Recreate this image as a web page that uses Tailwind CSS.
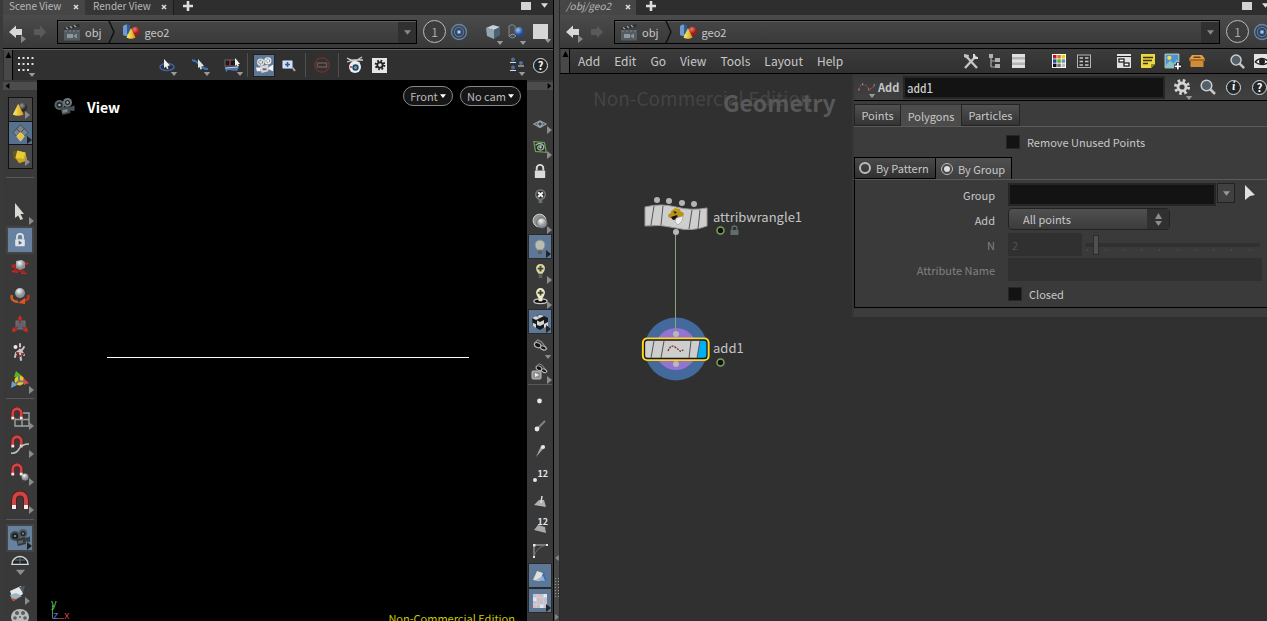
<!DOCTYPE html>
<html lang="en">
<head>
<meta charset="utf-8">
<title>Scene View</title>
<script src="https://cdn.jsdelivr.net/npm/@tailwindcss/browser@4"></script>
</head>
<body class="h-screen overflow-hidden bg-[#303030] font-['Noto_Sans_CJK_SC','Noto_Sans',sans-serif] text-[11px] leading-4 text-[#c8c8c8]">
<svg class="absolute size-0">
<defs>
<linearGradient id="gold" x1="0" y1="0" x2="1" y2="0"><stop offset="0" stop-color="#fff06a"/><stop offset="1" stop-color="#d79b12"/></linearGradient>
<radialGradient id="red" cx=".4" cy=".3"><stop offset="0" stop-color="#f07a6a"/><stop offset="1" stop-color="#a01c18"/></radialGradient>
<radialGradient id="blue" cx=".4" cy=".3"><stop offset="0" stop-color="#9cc4f0"/><stop offset="1" stop-color="#23488c"/></radialGradient>
<radialGradient id="grey" cx=".4" cy=".3"><stop offset="0" stop-color="#f4f4f4"/><stop offset="1" stop-color="#8a9096"/></radialGradient>
<radialGradient id="dark" cx=".4" cy=".3"><stop offset="0" stop-color="#9a9a9a"/><stop offset="1" stop-color="#2a2a2a"/></radialGradient>
</defs>
<symbol id="tri-d" viewBox="0 0 8 5"><path d="M0 0H8L4 5Z" fill="currentColor"/></symbol>
<symbol id="tri-u" viewBox="0 0 8 8"><path d="M0 8H8L4 0Z" fill="currentColor"/></symbol>
<symbol id="tri-r" viewBox="0 0 5 8"><path d="M0 0V8L5 4Z" fill="currentColor"/></symbol>
<symbol id="tri-l" viewBox="0 0 5 8"><path d="M5 0V8L0 4Z" fill="currentColor"/></symbol>
<symbol id="back" viewBox="0 0 16 16"><path d="M1 8L8 1.500V5H14V11H8V14Z" fill="currentColor"/></symbol>
<symbol id="fwd" viewBox="0 0 16 16"><path d="M14 8L8 1.500V5H2V11H8V14Z" fill="currentColor"/></symbol>
<symbol id="plus" viewBox="0 0 10 10"><path d="M5 0V10M0 5H10" stroke="currentColor" stroke-width="2.600"/></symbol>
<symbol id="x" viewBox="0 0 6 6"><path d="M1 1L5 5M5 1L1 5" stroke="currentColor" stroke-width="1.500"/></symbol>
<symbol id="clapper" viewBox="0 0 18 18"><rect x="1" y="7" width="16" height="10.500" fill="#525c62"/><path d="M1 5L16 1L17 3.500L2 7Z" fill="#2c3032"/><path d="M3 4.500L5 6M7 3.300L9 5M11 2.200L13 4" stroke="#9aa2a6" stroke-width="1.500"/><path d="M2 8H16" stroke="#788288" stroke-dasharray="2 2"/><rect x="4" y="11" width="6" height="4" fill="#8f989c"/><path d="M10 13L14 10.500V15.500Z" fill="#8a9296"/></symbol>
<symbol id="geo" viewBox="0 0 18 18"><path d="M1 3Q4 0 8 3V12Q4 14 1 12Z" fill="#6d9bd0"/><path d="M5 1.500Q8 2 8 4V11H5Z" fill="#2f5c98"/><circle cx="13.500" cy="8" r="4.300" fill="url(#red)"/><path d="M9 5L13.500 14.500Q9 17 4.500 14.500Z" fill="url(#gold)"/></symbol>
<symbol id="rings" viewBox="0 0 18 18" ><g fill="none"><circle cx="9" cy="9" r="7.500" stroke-width="1.300" stroke="#6285b4"/><circle cx="9" cy="9" r="4.600" stroke="#5078ac" stroke-width="1.200"/></g><circle cx="9" cy="9" r="2.300" fill="#4a8fe0"/><circle cx="9" cy="9" r="1" fill="#cfe4ff"/></symbol>
<symbol id="box" viewBox="0 0 18 18"><path d="M2 5L9 2L16 4L10 7Z" fill="#c6d2d8"/><path d="M2 5L10 7V16L3 13Z" fill="#93a7b3"/><path d="M10 7L16 4V12L10 16Z" fill="#4a6272"/></symbol>
<symbol id="ghost" viewBox="0 0 18 18"><path d="M2 3Q5 0 8 3L9 13Q5 17 2 13Z" fill="#4c4c4c" stroke="#858585"/><circle cx="12" cy="9" r="5" fill="url(#blue)"/><path d="M2 14Q5 9 9 13" fill="none" stroke="#999"/></symbol>
<symbol id="dots" viewBox="0 0 16 16"><g fill="#e0e0e0"><path d="M0 0h2v2H0zM4.500 0h2v2h-2zM9 0h2v2H9zM13.500 0h2v2h-2zM0 6h2v2H0zM4.500 6h2v2h-2zM9 6h2v2H9zM13.500 6h2v2h-2zM0 12h2v2H0zM4.500 12h2v2h-2zM9 12h2v2H9z"/></g></symbol>
<symbol id="sel" viewBox="0 0 18 18"><ellipse cx="9" cy="11" rx="7" ry="3.500" fill="none" stroke="#3c62a0" stroke-width="1.600"/><path d="M6 3L12 9.500L9.500 10L10.500 12.500L9 13L8 10.500L6 12Z" fill="#f2f2f2"/></symbol>
<symbol id="sel2" viewBox="0 0 18 18"><path d="M1 4Q6 5 9 9T17 13" fill="none" stroke="#3f6fae" stroke-width="2.200"/><path d="M7 3L13 10L10 10.500L11 13L9.500 13.500L8.600 11L7 12Z" fill="#e2e2e2"/></symbol>
<symbol id="sel3" viewBox="0 0 18 18"><rect x="1" y="4" width="12" height="6" fill="#1b1b1b" stroke="#666"/><path d="M6 4v6" stroke="#a33" stroke-width="1.500"/><path d="M1 12L15 11L13 15L4 14L2 16Z" fill="#4a77b4"/><path d="M1 12L14 11" stroke="#c2d4ec"/><path d="M11 2L16 8L14 8L15 10L13.500 10.500L12.500 8.500L11 10Z" fill="#f2f2f2"/></symbol>
<symbol id="movie" viewBox="0 0 20 20"><circle cx="6" cy="6.500" r="3.800" fill="#dedede"/><circle cx="13.500" cy="5" r="3.800" fill="#eee"/><g fill="none" stroke="#566" stroke-dasharray="1.500 1"><circle cx="6" cy="6.500" r="2"/><circle cx="13.500" cy="5" r="2"/></g><path d="M5 11L14 9V16L7 18Z" fill="#d8d8d8"/><path d="M14 12L19 9V16L14 14ZM1 12H6V16H2Z" fill="#f4f4f4"/><path d="M8 13h4v2H8z" fill="#667"/></symbol>
<symbol id="camdark" viewBox="0 0 22 20"><circle cx="6" cy="8" r="5" fill="#59646a"/><circle cx="14" cy="5.500" r="4.500" fill="#6d797f"/><g fill="#20262a"><circle cx="6" cy="8" r="3"/><circle cx="14" cy="5.500" r="2.500"/></g><circle cx="6" cy="8" r="1.300" fill="#9aa"/><circle cx="14" cy="5.500" r="1.200" fill="#9aa"/><path d="M7 11L16 9L17 16L9 18Z" fill="#434b50"/><path d="M16 10L21 8.500V14L16 13.500Z" fill="#49545a"/><path d="M9 13l5-1v3l-5 1z" fill="#788"/></symbol>
<symbol id="zoombox" viewBox="0 0 18 18"><path d="M12 11L15 15" stroke="#a8a8a8" stroke-width="2"/><rect x="2.500" y="4.500" width="10" height="8" rx="1" fill="#d5e1f0" stroke="#87929e"/><path d="M7.500 6V11M5 8.500H10" stroke="#2f5c9c" stroke-width="1.600"/></symbol>
<symbol id="noentry" viewBox="0 0 18 18"><circle cx="9" cy="9" r="7.200" fill="#3a2c2c" stroke="#6e3434" stroke-width="1.300"/><rect x="4.500" y="7" width="9" height="4" fill="none" stroke="#5c5c5c" stroke-width="1.500"/></symbol>
<symbol id="snap" viewBox="0 0 18 18"><path d="M1 2L8 6L16 1M1 6L8 4H17M3 3L14 7" stroke="#cfcfcf" stroke-width="1.300" fill="none"/><circle cx="9" cy="11" r="6" fill="#eceff0"/><circle cx="9.500" cy="11.500" r="3.200" fill="#27475c"/><circle cx="9.500" cy="11.500" r="1.500" fill="#5ea6d0"/><path d="M4 10h2v2H4z" fill="#d55"/></symbol>
<symbol id="gear" viewBox="0 0 18 18"><circle cx="9" cy="9" r="6" fill="none" stroke="currentColor" stroke-width="4" stroke-dasharray="2.356 2.356"/><circle cx="9" cy="9" r="4" fill="none" stroke="currentColor" stroke-width="2.800"/></symbol>
<symbol id="users" viewBox="0 0 18 18"><g fill="#4d6ca0"><circle cx="5" cy="3.500" r="2"/><circle cx="13" cy="7" r="2"/><circle cx="5" cy="11.500" r="2"/></g><g fill="#dadde2"><path d="M2 6h6v1H2zM10 9.500h6v1h-6zM2 14h6v1H2z"/></g></symbol>
<symbol id="mag" viewBox="0 0 18 18"><path d="M11 11L16 16" stroke="#c4c4c4" stroke-width="2.600"/><circle cx="7.500" cy="7.500" r="5.300" fill="#53606a" stroke="#cdcdcd" stroke-width="1.500"/></symbol>
<symbol id="cone" viewBox="0 0 20 20"><circle cx="13" cy="7" r="5" fill="url(#dark)"/><path d="M8 3L14 15Q8 18 2 15Z" fill="url(#gold)"/></symbol>
<symbol id="diam" viewBox="0 0 20 20"><g stroke="#2d3438" stroke-width=".7"><path d="M10 1L18 9L10 17L2 9Z" fill="#7c8488"/><path d="M6 5L14 13M14 5L6 13"/><path d="M10 9L14 13L10 18L6 13Z" fill="#e9bf3c" stroke="#fff0a0"/></g></symbol>
<symbol id="gcube" viewBox="0 0 20 20"><path d="M2 4L10 2L9 14L3 12Z" fill="#6b5a10"/><path d="M7 3L16 5L18 14L9 17L5 11Z" fill="#cda818"/><path d="M7 3L16 5L14 12L5 11Z" fill="#e6cc3c"/></symbol>
<symbol id="arrow" viewBox="0 0 20 20"><path d="M5 1L14 12H10.500L13 17L10.500 18L8.200 13.500L5 16Z" fill="#d9d9d4"/></symbol>
<symbol id="lock" viewBox="0 0 16 18"><path d="M4.500 8V5.500a3.500 3.500 0 0 1 7 0V8" fill="none" stroke="currentColor" stroke-width="2"/><rect x="2.500" y="8" width="11" height="8" rx="1" fill="currentColor"/></symbol>
<symbol id="slock" viewBox="0 0 16 18"><use href="#lock"/><path d="M6.500 9.500L10.500 12.500L6.500 14.500Z" fill="#4d6680"/></symbol>
<symbol id="move" viewBox="0 0 20 20"><path d="M1 14L6 10L8 15ZM17 16L12 11L11 16ZM19 5L13 4L14 9ZM1 7L6 6L8 9L3 10Z" fill="#c22a20"/><path d="M4 12L15 14M4 8L16 7" stroke="#a4221a" stroke-width="2"/><path d="M6 3L12 2L15 4V10L10 12L6 10Z" fill="url(#grey)"/></symbol>
<symbol id="rot" viewBox="0 0 20 20"><path d="M2 9Q0 15 8 16" fill="none" stroke="#d8601e" stroke-width="2.500"/><path d="M18 9Q20 14 13 15" fill="none" stroke="#c8331c" stroke-width="2.500"/><path d="M8 17L15 12V18Z" fill="#e2541c"/><circle cx="10" cy="7" r="5" fill="url(#grey)"/></symbol>
<symbol id="scale" viewBox="0 0 20 20"><rect x="6" y="7" width="9" height="8" fill="#59646c" stroke="#6a757c"/><path d="M10 9V4M8 13L5 15M13 13L15 15" stroke="#b3231c" stroke-width="2"/><path d="M10 1L12.500 5.500H7.500ZM2 18L3 13L7 17ZM18 18L17 13L13 17Z" fill="#d22a22"/></symbol>
<symbol id="pose" viewBox="0 0 20 20"><g stroke="#c8c8c8" stroke-width="2" stroke-linecap="round" fill="none"><path d="M10 2L10 7L14 13M10 8L6 11L5 15M10 11L11 18M12 8L14 5"/></g><circle cx="5.500" cy="5" r="2" fill="#e8e8e8"/><path d="M9 5h2v2H9zM6 10h2v2H6zM12 11h2v2h-2zM9 13h2v2H9z" fill="#b2302a"/></symbol>
<symbol id="axes" viewBox="0 0 20 20"><circle cx="9.500" cy="10.500" r="5" fill="#e6c824"/><path d="M9 11V4M9 11L4 15M9 11L16 12" stroke="#777" stroke-width="2"/><path d="M6 1L12 6L4 7Z" fill="#58b427"/><path d="M1 18L2 11L7 15Z" fill="#6e9fd4"/><path d="M19 13L13 8L14 15Z" fill="#d8484a"/></symbol>
<symbol id="magnet" viewBox="0 0 20 20"><path d="M4 18V8.500a6 6 0 0 1 12 0V18" fill="none" stroke="#5c1414" stroke-width="5.500"/><path d="M4 17V8.500a6 6 0 0 1 12 0V17" fill="none" stroke="#cf4444" stroke-width="4"/><path d="M2 14h4v4H2zM14 14h4v4h-4z" fill="#eee"/></symbol>
<symbol id="mgrid" viewBox="0 0 22 22"><path d="M12 7H20V20H6V12M13 7V20M6 13.500H20" fill="none" stroke="#9aa6a2" stroke-width="1.400"/><use href="#magnet" x="1" y="1" width="14" height="14"/></symbol>
<symbol id="mcurve" viewBox="0 0 22 22"><use href="#magnet" x="1" y="1" width="14" height="14"/><path d="M2 19Q7 20 10 15T20 10" fill="none" stroke="#b8c4c4" stroke-width="1.500"/></symbol>
<symbol id="mpoint" viewBox="0 0 22 22"><use href="#magnet" x="1" y="1" width="14" height="14"/><circle cx="16" cy="15" r="3.500" fill="url(#grey)"/></symbol>
<symbol id="globe" viewBox="0 0 20 10"><path d="M2 9.500a8 8 0 0 1 16 0Z" fill="#20262c" stroke="#d8d8d8" stroke-width="1.500"/><path d="M10 2V9M5 5H15" stroke="#68747c"/></symbol>
<symbol id="books" viewBox="0 0 20 20"><path d="M2 8L13 3L15 11L5 17Z" fill="#e4e8ea"/><path d="M2 12L8 10L14 13L5 18Z" fill="#9db4c4"/><path d="M2 15L8 16L14 13L6 18Z" fill="#bd4a34"/><path d="M11 4L17 3L15 10Z" fill="#4c5960"/></symbol>
<symbol id="reel" viewBox="0 0 20 20"><ellipse cx="10" cy="10" rx="9" ry="8" fill="#b9bcb8"/><g fill="#5b5e5c"><circle cx="7" cy="6" r="2"/><circle cx="13" cy="6" r="2"/><circle cx="5" cy="11" r="1.800"/><circle cx="15" cy="11" r="1.800"/><circle cx="10" cy="10" r="1"/></g></symbol>
<symbol id="eye" viewBox="0 0 18 18"><path d="M2 9L9 5.500L16 9L9 13Z" fill="#536168" stroke="#93a0a4" stroke-width="1.200"/><circle cx="9" cy="9" r="2.500" fill="#39444a" stroke="#bcc8cc"/></symbol>
<symbol id="eyegreen" viewBox="0 0 18 18"><path d="M2 3L14 4L16 15L4 14Z" fill="#1e2c22" stroke="#6e9c58" stroke-width="1.400"/><path d="M4 7Q9 3 13 7.500Q14 12 9.500 12.500Q6 12 6.500 9Q8 6.500 11 8" fill="none" stroke="#a4b8a8" stroke-width="1.500"/><circle cx="9.500" cy="9.500" r="1.300" fill="#cfe2d0"/></symbol>
<symbol id="bulbx" viewBox="0 0 18 18"><circle cx="9" cy="7" r="5" fill="#2a2e2e" stroke="#828886" stroke-width="1.300"/><path d="M6.500 4.500L11.500 9.500M11.500 4.500L6.500 9.500" stroke="#f0f0f0" stroke-width="2"/><path d="M7 12h4v4H7z" fill="#69706e"/></symbol>
<symbol id="balls" viewBox="0 0 18 18"><circle cx="8" cy="8" r="6.800" fill="#8f9290" stroke="#d8dad8"/><circle cx="10.500" cy="10.500" r="5.500" fill="url(#grey)" stroke="#5d605e" stroke-width=".8"/></symbol>
<symbol id="bulb" viewBox="0 0 18 18"><path d="M9 2a5 5 0 0 1 5 5Q14 9.500 11.500 12H6.500Q4 9.500 4 7a5 5 0 0 1 5-5Z" fill="#b9bcb4" stroke="#8a8c84"/><path d="M7 12.500h4v3.500H7z" fill="#59605e"/></symbol>
<symbol id="bulbp" viewBox="0 0 18 18"><path d="M9 1a4.700 4.700 0 0 1 4.700 5Q13.500 8.500 11 11.500H7Q4.500 8.500 4.300 6A4.700 4.700 0 0 1 9 1Z" fill="#dcdaa4"/><path d="M9 3V9M6 6H12" stroke="#444430" stroke-width="2"/><path d="M7 12h4v4H7z" fill="#59605e"/></symbol>
<symbol id="bulbs" viewBox="0 0 18 18"><ellipse cx="9" cy="14" rx="7" ry="2.500" fill="#0c0c0c" stroke="#c8c8c8" stroke-width="1.400"/><path d="M9 0a4.700 4.700 0 0 1 4.700 5Q13.500 7.500 11 11V14H7V11Q4.500 7.500 4.300 5A4.700 4.700 0 0 1 9 0Z" fill="#eeeccc"/><path d="M9 2V8M6 5H12" stroke="#444430" stroke-width="2"/></symbol>
<symbol id="checkcube" viewBox="0 0 18 18"><path d="M1 5L9 1L17 5V12L9 17L2 13Z" fill="#17191b"/><path d="M1 5L5 3L9 5L5 7ZM9 1.500L13 3L9 5L6 3ZM2 10L5 11V15L2 13ZM6 7.500L9 9V13L6 12ZM13 11L17 9V13L13 15ZM9 9L13 7V11L9 13Z" fill="#d4d4d4"/></symbol>
<symbol id="specs" viewBox="0 0 18 18"><path d="M2 6L6 2L10 4L16 12" fill="none" stroke="#8c9292" stroke-width="1.200"/><g fill="#101212" stroke="#b4b8b6" stroke-width="1.200"><ellipse cx="6" cy="7.500" rx="3.600" ry="2.500" transform="rotate(25 6 7.500)"/><ellipse cx="12" cy="10.500" rx="3.200" ry="2" transform="rotate(25 12 10.500)"/></g></symbol>
<symbol id="specs2" viewBox="0 0 18 18"><use href="#specs" x="3" y="-1" width="15" height="15"/><rect x="1" y="8" width="9" height="8" rx="1" fill="#8e928f" stroke="#bbb"/><path d="M4 10V14L8 12Z" fill="#eee"/></symbol>
<symbol id="pt" viewBox="0 0 18 18"><circle cx="8.500" cy="9" r="2.400" fill="#e4e8e6"/></symbol>
<symbol id="ptn" viewBox="0 0 18 18"><path d="M7 11L14 4" stroke="#7e8684" stroke-width="2"/><circle cx="6" cy="12" r="2.400" fill="#e4e8e6"/></symbol>
<symbol id="ptt" viewBox="0 0 18 18"><path d="M13 6L5 15L10 4Z" fill="#a0a6a4"/><circle cx="12" cy="5" r="2.100" fill="#e4e8e6"/></symbol>
<symbol id="prn" viewBox="0 0 18 18"><path d="M8 8L13 8L15 15L3 13Z" fill="#b0b4b0"/><path d="M10 11L11 4" stroke="#ddd" stroke-width="1.500"/></symbol>
<symbol id="poly" viewBox="0 0 18 18"><path d="M7 8L14 10L15 16L3 13Z" fill="#a8aca8"/></symbol>
<symbol id="hull" viewBox="0 0 18 18"><path d="M3 16V3H16" fill="none" stroke="#8f9593" stroke-width="1.300"/><path d="M3 15Q5 5 16 3" fill="none" stroke="#6a706e"/><path d="M2 2h2.500v2.500H2zM15 2h2v2h-2zM2 14h2v2H2z" fill="#e4e4e4"/></symbol>
<symbol id="plane" viewBox="0 0 18 18"><path d="M11 6L13 5L16 14L9 12Z" fill="#3c70b4"/><path d="M6 4L12 6L9 14L2 13Z" fill="#e0e0d8"/><path d="M5 13L12 9L14 14Z" fill="#8fb2d8"/></symbol>
<symbol id="chk" viewBox="0 0 14 14"><path d="M0 0h14v14H0z" fill="#e4e6e8"/><path d="M0 0h3.500v3.500H0zM7 0h3.500v3.500H7zM3.500 3.500H7V7H3.500zM10.500 3.500H14V7h-3.500zM0 7h3.500v3.500H0zM7 7h3.500v3.500H7zM3.500 10.500H7V14H3.500zM10.500 10.500H14V14h-3.500z" fill="#b4c6dc"/><path d="M3.500 0H7v3.500H3.500zM7 3.500h3.500V7H7zM3.500 7H7v3.500H3.500zM10.500 7H14v3.500h-3.500zM0 10.500h3.500V14H0z" fill="#e2b9b4"/></symbol>
<symbol id="tools" viewBox="0 0 16 16"><path d="M3 3L14 15M13 3L2 15" stroke="#c4c4c4" stroke-width="2.400"/><path d="M1 1L6 2L5 6L1 4Z" fill="#c4c4c4"/><path d="M11 5V1M15 5H11" stroke="#dcdcdc" stroke-width="2"/></symbol>
<symbol id="tree" viewBox="0 0 16 16"><path d="M4 3V14M4 8H9M4 14H9" fill="none" stroke="#aaa" stroke-width="1.200"/><path d="M2 1h4v4H2zM8 5h5v4H8zM8 11h5v4H8z" fill="#b0b0b0"/></symbol>
<symbol id="list" viewBox="0 0 16 16"><path d="M1 1h13v14H1z" fill="#b4b4b4"/><path d="M1 1h13v3H1zM1 6.500h13v3H1zM1 12h13v3H1z" fill="#e0e0e0"/></symbol>
<symbol id="pal" viewBox="0 0 16 16"><path d="M1 1h14v14H1z" fill="#fff"/><path d="M2 2h3.500v3.500H2z" fill="#c01818"/><path d="M6.300 2h3.500v3.500H6.300z" fill="#e26a18"/><path d="M10.600 2h3.500v3.500h-3.500z" fill="#e4d000"/><path d="M2 6.300h3.500v3.500H2z" fill="#1848b0"/><path d="M6.300 6.300h3.500v3.500H6.300z" fill="#58b018"/><path d="M10.600 6.300h3.500v3.500h-3.500z" fill="#6890c0"/><path d="M2 10.600h3.500v3.500H2z" fill="#111"/><path d="M6.300 10.600h3.500v3.500H6.300z" fill="#777"/><path d="M10.600 10.600h3.500v3.500h-3.500z" fill="#bbb"/></symbol>
<symbol id="sheet" viewBox="0 0 16 16"><rect x="1.500" y="2" width="13" height="12.500" fill="#303030" stroke="#b4b4b4"/><path d="M3.500 5H7M9 5H12.500M3.500 8.500H7M9 8.500H12.500M3.500 12H7M9 12H12.500" stroke="#c8c8c8" stroke-width="1.500"/></symbol>
<symbol id="nbox" viewBox="0 0 16 16"><path d="M1 1h14v14H1z" fill="#e0e0e0"/><path d="M1 3.500H15" stroke="#222"/><rect x="3" y="6" width="5" height="3" fill="#fff" stroke="#111" stroke-width="1.200"/><rect x="8" y="10" width="5" height="3" fill="#fff" stroke="#111" stroke-width="1.200"/></symbol>
<symbol id="note" viewBox="0 0 16 16"><path d="M1 1H15V11L11 15H1Z" fill="#ecd845"/><path d="M15 11H11V15Z" fill="#9a8820"/><path d="M3 4.500H13M3 7.500H12M3 10.500H8" stroke="#3a3408" stroke-width="1.300"/></symbol>
<symbol id="pic" viewBox="0 0 16 16"><path d="M1 1h13v13H1z" fill="#4d94d0" stroke="#ddd" stroke-width=".8"/><circle cx="5" cy="4.500" r="2" fill="#f4e23c"/><path d="M1 12L6 7L9 10L12 6L14 9V14H1Z" fill="#8dc2c8"/><path d="M13 9V16M9.500 12.500H16" stroke="#111" stroke-width="3.500"/><path d="M13 9.500V15.500M10 12.500H16" stroke="#fff" stroke-width="1.700"/></symbol>
<symbol id="crate" viewBox="0 0 16 16"><path d="M3 2H13L16 6H0Z" fill="#e0a050"/><path d="M5 3.500H11L12 5H4Z" fill="#6a4010"/><path d="M0 6H16V8H0Z" fill="#b06c20"/><path d="M1.500 8H14.500V14H1.500Z" fill="#d08c38"/></symbol>
<symbol id="eyeb" viewBox="0 0 16 16"><path d="M0 1h16v14H0z" fill="#e4e4e4"/><path d="M1 9Q8 2 15 9Q8 14 1 9" fill="#fff" stroke="#222" stroke-width="1.400"/><circle cx="8" cy="8.500" r="3" fill="#222"/></symbol>
<symbol id="squig" viewBox="0 0 20 14"><path d="M1 10Q3 3 6 4T11 8T18 6" fill="none" stroke="#a84848" stroke-width="1.300" stroke-dasharray="2 1.500"/><path d="M1 9v2M5 3v2M12 9v2M18 4v2" stroke="#999" stroke-width="1.200"/></symbol>
</svg>

<div class="grid h-full grid-cols-[554fr_6px_707fr]">

<!-- Scene view pane -->
<section class="flex min-w-0 flex-col overflow-hidden border-r border-black bg-[#3a3a3a] pl-[3px]" aria-label="Scene View">
  <nav class="flex h-[15px] shrink-0 items-center bg-[#2e2e2e] text-[10px] text-[#b8b8b8]">
    <button class="flex h-full w-[82px] items-center justify-between bg-[#464646] pr-1.5 pl-1.5 leading-3"><span class="-mt-1 whitespace-nowrap">Scene View</span><svg class="-mt-0.5 size-1.5 text-[#ddd]"><use href="#x"/></svg></button>
    <button class="flex h-full w-[89px] items-center justify-between border-r border-[#1c1c1c] bg-[#363636] pr-1.5 pl-2 leading-3"><span class="-mt-1 whitespace-nowrap">Render View</span><svg class="-mt-0.5 size-1.5 text-[#ddd]"><use href="#x"/></svg></button>
    <button class="-mt-1 ml-[9px] text-[#ddd]" aria-label="New tab"><svg class="size-[10px]"><use href="#plus"/></svg></button>
    <button class="-mt-1 ml-auto h-2 w-[10px] bg-[#d4d4d0]" aria-label="Maximize"></button>
    <button class="-mt-1 mr-[5px] ml-2.5 text-[#ddd]" aria-label="Pane menu"><svg class="h-[5px] w-[7px]"><use href="#tri-d"/></svg></button>
  </nav>
  <div class="flex h-[34px] shrink-0 items-center border-b border-black bg-linear-to-b from-[#4b4b4b] to-[#393939] pl-[5px]">
    <button class="relative text-[#d8d8d4]" aria-label="Back"><svg class="size-4"><use href="#back"/></svg><svg class="absolute -right-0.5 bottom-[-3px] h-2 w-[5px] text-[#888]"><use href="#tri-r"/></svg></button>
    <button class="ml-2 text-[#5a5a5a]" aria-label="Forward"><svg class="size-4"><use href="#fwd"/></svg></button>
    <div class="ml-[9px] flex h-6 min-w-0 flex-1 items-center border border-black bg-linear-to-b from-[#454545] to-[#3a3a3a] shadow-[inset_0_1px_#5c5c5c]">
      <svg class="ml-[5px] size-[18px]"><use href="#clapper"/></svg><a href="#obj" class="ml-1">obj</a>
      <svg class="mx-[6px] h-[22px] w-2"><path d="M1 0L6 11L1 22" fill="none" stroke="#111" stroke-width="1.500"/></svg>
      <svg class="size-[18px]"><use href="#geo"/></svg><a href="#geo2" class="ml-[5px]">geo2</a>
      <button class="mt-px ml-auto grid h-[21px] w-[18px] place-items-center bg-[#303030] text-[#888]" aria-label="Path history"><svg class="h-[5px] w-[7px]"><use href="#tri-d"/></svg></button>
    </div>
    <button class="ml-1.5 grid size-[23px] shrink-0 place-items-center rounded-full border border-[#bbb] bg-[#3c3c3c] text-xs text-[#aaa]">1</button>
    <svg class="ml-1 size-[18px] shrink-0"><use href="#rings"/></svg>
    <button class="relative ml-4 shrink-0" aria-label="Shading"><svg class="size-[18px]"><use href="#box"/></svg><svg class="absolute -right-0.5 -bottom-1 h-1 w-2 text-[#999]"><use href="#tri-d"/></svg></button>
    <button class="relative ml-[5px] shrink-0" aria-label="Ghosting"><svg class="size-[18px]"><use href="#ghost"/></svg><svg class="absolute -right-0.5 -bottom-1 h-1 w-2 text-[#999]"><use href="#tri-d"/></svg></button>
    <button class="relative mr-[5px] ml-2 size-[15px] shrink-0 bg-[#d6d6d4]" aria-label="Layout"><svg class="absolute -right-1 -bottom-1 h-1 w-2 text-[#999]"><use href="#tri-d"/></svg></button>
  </div>
  <div class="flex h-[31px] shrink-0 items-center border-t border-[#606060] bg-[#303030]">
    <button class="ml-px flex h-full w-[9px] justify-center border-r border-black bg-[#484848] pt-0.5 text-black" aria-label="Collapse toolbar"><svg class="h-1.5 w-[7px]"><use href="#tri-u"/></svg></button>
    <button class="relative ml-[5px]" aria-label="Handles"><svg class="size-4"><use href="#dots"/></svg><svg class="absolute -right-0.5 -bottom-1 h-1 w-2 text-[#999]"><use href="#tri-d"/></svg></button>
    <button class="relative ml-[124px]" aria-label="Select objects"><svg class="size-[18px]"><use href="#sel"/></svg><svg class="absolute -right-0.5 -bottom-0.5 h-1 w-2 text-[#999]"><use href="#tri-d"/></svg></button>
    <button class="relative ml-[15px]" aria-label="Select edges"><svg class="size-[18px]"><use href="#sel2"/></svg><svg class="absolute -right-0.5 -bottom-0.5 h-1 w-2 text-[#999]"><use href="#tri-d"/></svg></button>
    <button class="relative ml-[15px]" aria-label="Select faces"><svg class="size-[18px]"><use href="#sel3"/></svg><svg class="absolute -right-0.5 -bottom-0.5 h-1 w-2 text-[#999]"><use href="#tri-d"/></svg></button>
    <i class="mx-[5px] h-6 w-px bg-[#505050]"></i>
    <button class="grid h-[23px] w-[22px] place-items-center border border-[#222] bg-[#5c7896]" aria-label="View tool"><svg class="size-[19px]"><use href="#movie"/></svg></button>
    <button class="ml-[5px]" aria-label="Zoom box"><svg class="size-[18px]"><use href="#zoombox"/></svg></button>
    <i class="mx-[7px] h-6 w-px bg-[#505050]"></i>
    <button aria-label="Disable"><svg class="size-[18px]"><use href="#noentry"/></svg></button>
    <i class="mx-[7px] h-6 w-px bg-[#505050]"></i>
    <button aria-label="Snapshot"><svg class="size-[18px]"><use href="#snap"/></svg></button>
    <button class="ml-2 grid size-[15px] place-items-center bg-[#e6e6e6] text-[#222]" aria-label="Settings"><svg class="size-3"><use href="#gear"/></svg></button>
    <button class="relative ml-auto" aria-label="Visualizers"><svg class="size-[18px]"><use href="#users"/></svg><svg class="absolute right-0 -bottom-0.5 h-1 w-2 text-[#999]"><use href="#tri-d"/></svg></button>
    <button class="mr-[5px] ml-[7px] grid size-[15px] place-items-center rounded-full border border-[#e2e2e2] bg-[#1f2527] leading-3 font-bold text-white">?</button>
  </div>

  <div class="flex min-h-0 flex-1">
    <aside class="flex w-[34px] shrink-0 flex-col items-center overflow-hidden bg-[#393939] text-[#8c8c8c]">
      <button class="mt-0.5 flex h-2 w-full shrink-0 items-center bg-[#4c4c4c] pl-0.5 text-black" aria-label="Collapse left"><svg class="h-1.5 w-[5px]"><use href="#tri-l"/></svg></button>
      <div class="mt-[7px] flex w-[25px] shrink-0 flex-col border border-[#111] bg-[#484848]">
        <button class="relative grid h-[23px] place-items-center" aria-label="Objects"><svg class="size-[18px]"><use href="#cone"/></svg><svg class="absolute right-0.5 bottom-0.5 h-2 w-[5px]"><use href="#tri-r"/></svg></button>
        <button class="relative grid h-6 place-items-center border-y border-[#111] bg-[#56708e]" aria-label="Components"><svg class="size-[19px]"><use href="#diam"/></svg><svg class="absolute right-0 bottom-0 h-2 w-[5px] text-[#222]"><use href="#tri-r"/></svg></button>
        <button class="relative grid h-[23px] place-items-center" aria-label="Dynamics"><svg class="size-[18px]"><use href="#gcube"/></svg><svg class="absolute right-0.5 bottom-0.5 h-2 w-[5px]"><use href="#tri-r"/></svg></button>
      </div>
      <i class="mt-2 mb-5 h-px w-7 shrink-0 bg-[#585858]"></i>
      <button class="relative grid h-7 w-7 shrink-0 place-items-center" aria-label="Select"><svg class="size-5"><use href="#arrow"/></svg><svg class="absolute right-0 bottom-px h-2 w-[5px]"><use href="#tri-r"/></svg></button>
      <button class="grid h-7 w-7 shrink-0 place-items-center border-2 border-[#444] bg-[#6682a0] text-[#dfe3e6]" aria-label="Secure selection"><svg class="h-4 w-3.5"><use href="#slock"/></svg></button>
      <button class="grid h-7 w-7 shrink-0 place-items-center" aria-label="Move"><svg class="size-5"><use href="#move"/></svg></button>
      <button class="grid h-7 w-7 shrink-0 place-items-center" aria-label="Rotate"><svg class="size-5"><use href="#rot"/></svg></button>
      <button class="grid h-7 w-7 shrink-0 place-items-center" aria-label="Scale"><svg class="size-5"><use href="#scale"/></svg></button>
      <button class="grid h-7 w-7 shrink-0 place-items-center" aria-label="Pose"><svg class="size-5"><use href="#pose"/></svg></button>
      <button class="relative grid h-7 w-7 shrink-0 place-items-center" aria-label="Handles"><svg class="size-5"><use href="#axes"/></svg><svg class="absolute right-0 bottom-0 h-2 w-[5px]"><use href="#tri-r"/></svg></button>
      <i class="my-1 h-px w-7 shrink-0 bg-[#585858]"></i>
      <button class="relative grid h-7 w-7 shrink-0 place-items-center" aria-label="Snap grid"><svg class="size-[22px]"><use href="#mgrid"/></svg><svg class="absolute right-0 bottom-px h-2 w-[5px]"><use href="#tri-r"/></svg></button>
      <button class="relative grid h-7 w-7 shrink-0 place-items-center" aria-label="Snap curve"><svg class="size-[22px]"><use href="#mcurve"/></svg><svg class="absolute right-0 bottom-px h-2 w-[5px]"><use href="#tri-r"/></svg></button>
      <button class="relative grid h-7 w-7 shrink-0 place-items-center" aria-label="Snap point"><svg class="size-[22px]"><use href="#mpoint"/></svg><svg class="absolute right-0 bottom-px h-2 w-[5px]"><use href="#tri-r"/></svg></button>
      <button class="relative grid h-7 w-7 shrink-0 place-items-center" aria-label="Snap multi"><svg class="size-5"><use href="#magnet"/></svg><svg class="absolute right-0 bottom-px h-2 w-[5px]"><use href="#tri-r"/></svg></button>
      <i class="my-1 h-px w-7 shrink-0 bg-[#585858]"></i>
      <button class="relative grid h-7 w-7 shrink-0 place-items-center border-2 border-[#444] bg-[#6682a0]" aria-label="Camera"><svg class="h-5 w-[22px] brightness-75"><use href="#camdark"/></svg><svg class="absolute right-0 bottom-0 h-2 w-[5px] text-[#222]"><use href="#tri-r"/></svg></button>
      <svg class="mt-[3px] h-[10px] w-5 shrink-0"><use href="#globe"/></svg>
      <button class="mt-1 h-[7px] shrink-0" aria-label="More"><svg class="h-[7px] w-[9px]"><use href="#tri-d"/></svg></button>
      <button class="relative mt-[3px] grid h-7 w-7 shrink-0 place-items-center pr-1" aria-label="Flipbook"><svg class="size-5"><use href="#books"/></svg><svg class="absolute right-1 bottom-0.5 h-2 w-[5px]"><use href="#tri-r"/></svg></button>
      <button class="h-5 w-7 shrink-0 pl-1" aria-label="Render"><svg class="size-5"><use href="#reel"/></svg></button>
    </aside>

    <main class="relative min-w-0 flex-1 bg-black">
      <div class="flex items-center pt-[17px] pl-4">
        <svg class="h-5 w-[23px]"><use href="#camdark"/></svg>
        <h1 class="ml-[11px] text-sm leading-5 font-bold text-white">View</h1>
      </div>
      <div class="absolute top-[6px] right-1.5 flex gap-[7px] text-[#bbb]">
        <button class="flex h-5 w-[50px] items-center justify-center gap-0.5 rounded-full border border-[#888] bg-[#161616]">Front<svg class="h-1 w-1.5 text-white"><use href="#tri-d"/></svg></button>
        <button class="flex h-5 w-[61px] items-center justify-center gap-0.5 rounded-full border border-[#888] bg-[#161616] whitespace-nowrap">No cam<svg class="h-1 w-1.5 text-white"><use href="#tri-d"/></svg></button>
      </div>
      <div class="absolute top-[277px] right-[58px] left-[70px] h-px bg-white"></div>
      <svg class="absolute bottom-0 left-3 h-8 w-6" font-family="Noto Sans CJK SC" font-size="11"><path d="M3.500 16V29.500H15" fill="none" stroke="#8c3030"/><path d="M3.500 16V29" stroke="#38a038"/><text x="2" y="18" fill="#5ac85a">y</text><text x="4" y="30" fill="#5a6ae8">z</text><text x="15" y="30" fill="#c83c3c">x</text></svg>
      <p class="absolute right-3 bottom-[-5px] text-[#c8c800]">Non-Commercial Edition</p>
    </main>

    <aside class="flex w-[26px] shrink-0 flex-col items-center overflow-hidden bg-[#393939] text-[#8c8c8c]">
      <button class="mt-0.5 mb-[19px] flex h-2 w-full shrink-0 items-center justify-end bg-[#4c4c4c] pr-px text-black" aria-label="Collapse right"><svg class="h-1.5 w-[5px]"><use href="#tri-r"/></svg></button>
      <button class="relative grid h-[25px] w-6 shrink-0 place-items-center pt-1" aria-label="Display"><svg class="size-4"><use href="#eye"/></svg><svg class="absolute right-0 bottom-0 h-2 w-[5px]"><use href="#tri-r"/></svg></button>
      <button class="relative grid h-[25px] w-6 shrink-0 place-items-center" aria-label="Snapshot view"><svg class="size-4"><use href="#eyegreen"/></svg><svg class="absolute right-0 bottom-0 h-2 w-[5px]"><use href="#tri-r"/></svg></button>
      <button class="grid h-[25px] w-6 shrink-0 place-items-center text-[#dadad8]" aria-label="Lock camera"><svg class="h-[17px] w-4"><use href="#lock"/></svg></button>
      <button class="grid h-[25px] w-6 shrink-0 place-items-center" aria-label="No lighting"><svg class="size-[17px]"><use href="#bulbx"/></svg></button>
      <button class="relative grid h-[25px] w-6 shrink-0 place-items-center" aria-label="Materials"><svg class="size-[17px]"><use href="#balls"/></svg><svg class="absolute right-0 bottom-0 h-2 w-[5px]"><use href="#tri-r"/></svg></button>
      <button class="relative grid h-[25px] w-6 shrink-0 place-items-center border border-[#2a2a2a] bg-[#5c7896]" aria-label="Headlight"><svg class="size-[18px]"><use href="#bulb"/></svg><svg class="absolute right-0 bottom-0 h-2 w-[5px] text-[#222]"><use href="#tri-r"/></svg></button>
      <button class="relative grid h-[25px] w-6 shrink-0 place-items-center" aria-label="Lights"><svg class="size-[17px]"><use href="#bulbp"/></svg><svg class="absolute right-0 bottom-0 h-2 w-[5px]"><use href="#tri-r"/></svg></button>
      <button class="relative grid h-[25px] w-6 shrink-0 place-items-center" aria-label="Shadows"><svg class="size-[17px]"><use href="#bulbs"/></svg><svg class="absolute right-0 bottom-0 h-2 w-[5px]"><use href="#tri-r"/></svg></button>
      <button class="relative grid h-[25px] w-6 shrink-0 place-items-center border border-[#2a2a2a] bg-[#5c7896]" aria-label="Shading"><svg class="size-[18px]"><use href="#checkcube"/></svg><svg class="absolute right-0 bottom-0 h-2 w-[5px] text-[#222]"><use href="#tri-r"/></svg></button>
      <button class="relative grid h-[25px] w-6 shrink-0 place-items-center" aria-label="Hide others"><svg class="size-[17px]"><use href="#specs"/></svg><svg class="absolute right-0 bottom-0 h-1 w-2"><use href="#tri-d"/></svg></button>
      <button class="relative grid h-[25px] w-6 shrink-0 place-items-center" aria-label="Ghost others"><svg class="size-[18px]"><use href="#specs2"/></svg><svg class="absolute right-0 bottom-0 h-2 w-[5px]"><use href="#tri-r"/></svg></button>
      <i class="mb-[3px] h-px w-6 shrink-0 bg-[#585858]"></i>
      <button class="grid h-[25px] w-6 shrink-0 place-items-center" aria-label="Points"><svg class="size-[18px]"><use href="#pt"/></svg></button>
      <button class="grid h-[25px] w-6 shrink-0 place-items-center" aria-label="Point normals"><svg class="size-[18px]"><use href="#ptn"/></svg></button>
      <button class="grid h-[25px] w-6 shrink-0 place-items-center" aria-label="Point trails"><svg class="size-[18px]"><use href="#ptt"/></svg></button>
      <button class="flex h-[25px] w-6 shrink-0 items-center justify-end pr-1 pb-1 text-[9px] font-bold text-[#e4e4e4]" aria-label="Point numbers"><i class="mt-3 size-1 rounded-full bg-[#e4e4e4]"></i>12</button>
      <button class="grid h-[25px] w-6 shrink-0 place-items-center" aria-label="Primitive normals"><svg class="size-[18px]"><use href="#prn"/></svg></button>
      <button class="relative grid h-[25px] w-6 shrink-0 place-items-center" aria-label="Primitive numbers"><svg class="size-[18px]"><use href="#poly"/></svg><span class="absolute top-px right-1 text-[9px] font-bold text-[#e4e4e4]">12</span></button>
      <button class="grid h-[25px] w-6 shrink-0 place-items-center" aria-label="Hulls"><svg class="size-[18px]"><use href="#hull"/></svg></button>
      <button class="grid h-[25px] w-6 shrink-0 place-items-center border border-[#2a2a2a] bg-[#5c7896]" aria-label="Construction plane"><svg class="size-[18px]"><use href="#plane"/></svg></button>
      <button class="relative grid h-[25px] w-6 shrink-0 place-items-center border border-[#2a2a2a] bg-[#5c7896]" aria-label="Background"><svg class="size-3.5"><use href="#chk"/></svg><svg class="absolute right-0 bottom-0 h-2 w-[5px] text-[#222]"><use href="#tri-r"/></svg></button>
    </aside>
  </div>
</section>

<!-- Pane splitter -->
<div class="flex flex-col items-center justify-end gap-[17px] border-r border-[#2a2a2a] bg-[#484848] text-[#888]">
  <svg class="h-1.5 w-1"><use href="#tri-l"/></svg>
  <svg class="h-[19px] w-1"><path d="M.500 0V19M3.500 0V19" stroke="#999" stroke-dasharray="1 2"/></svg>
  <svg class="mb-px h-1.5 w-1"><use href="#tri-r"/></svg>
</div>

<!-- Network pane -->
<section class="flex min-w-0 flex-col overflow-hidden bg-[#303030]" aria-label="Network">
  <nav class="flex h-[15px] shrink-0 items-center bg-[#2e2e2e] text-[10px] text-[#b8b8b8]">
    <button class="flex h-full w-[76px] items-center justify-between bg-[#464646] pr-[5px] pl-1.5 leading-3"><span class="-mt-1 italic">/obj/geo2</span><svg class="-mt-0.5 size-1.5 text-[#ddd]"><use href="#x"/></svg></button>
    <button class="-mt-1 ml-[10px] text-[#ddd]" aria-label="New tab"><svg class="size-[10px]"><use href="#plus"/></svg></button>
    <button class="-mt-1 ml-auto h-2 w-[10px] bg-[#d4d4d0]" aria-label="Maximize"></button>
    <button class="-mt-1 -mr-0.5 ml-2.5 text-[#ddd]" aria-label="Pane menu"><svg class="h-[5px] w-[7px]"><use href="#tri-d"/></svg></button>
  </nav>
  <div class="flex h-[34px] shrink-0 items-center border-b border-black bg-linear-to-b from-[#4b4b4b] to-[#393939] pl-[5px]">
    <button class="relative text-[#d8d8d4]" aria-label="Back"><svg class="size-4"><use href="#back"/></svg><svg class="absolute -right-0.5 bottom-[-3px] h-2 w-[5px] text-[#888]"><use href="#tri-r"/></svg></button>
    <button class="ml-2 text-[#5a5a5a]" aria-label="Forward"><svg class="size-4"><use href="#fwd"/></svg></button>
    <div class="ml-[9px] flex h-6 min-w-0 flex-1 items-center border border-black bg-linear-to-b from-[#454545] to-[#3a3a3a] shadow-[inset_0_1px_#5c5c5c]">
      <svg class="ml-[5px] size-[18px]"><use href="#clapper"/></svg><a href="#obj" class="ml-1">obj</a>
      <svg class="mx-[6px] h-[22px] w-2"><path d="M1 0L6 11L1 22" fill="none" stroke="#111" stroke-width="1.500"/></svg>
      <svg class="size-[18px]"><use href="#geo"/></svg><a href="#geo2" class="ml-[5px]">geo2</a>
      <button class="mt-px ml-auto grid h-[21px] w-[18px] place-items-center bg-[#303030] text-[#888]" aria-label="Path history"><svg class="h-[5px] w-[7px]"><use href="#tri-d"/></svg></button>
    </div>
    <button class="ml-1.5 grid size-[23px] shrink-0 place-items-center rounded-full border border-[#bbb] bg-[#3c3c3c] text-xs text-[#aaa]">1</button>
    <svg class="-mr-1 ml-1 size-[18px] shrink-0"><use href="#rings"/></svg>
  </div>
  <div class="flex h-[25px] shrink-0 items-center border-b border-black bg-linear-to-b from-[#3c3c3c] to-[#303030]">
    <button class="ml-px flex h-full w-[9px] justify-center border-r border-black bg-[#484848] pt-0.5 text-black" aria-label="Collapse menu"><svg class="h-1.5 w-[7px]"><use href="#tri-u"/></svg></button>
    <div class="ml-2 flex gap-[14px] text-xs"><button>Add</button><button>Edit</button><button>Go</button><button>View</button><button>Tools</button><button>Layout</button><button>Help</button></div>
    <div class="-mr-[3px] ml-auto flex gap-6">
      <div class="flex gap-2"><svg class="size-4"><use href="#tools"/></svg><svg class="size-4"><use href="#tree"/></svg><svg class="size-4"><use href="#list"/></svg></div>
      <div class="flex gap-[9px]"><svg class="size-4"><use href="#pal"/></svg><svg class="size-4"><use href="#sheet"/></svg></div>
      <div class="flex gap-2"><svg class="size-4"><use href="#nbox"/></svg><svg class="size-4"><use href="#note"/></svg><svg class="size-[17px]"><use href="#pic"/></svg><svg class="size-4"><use href="#crate"/></svg></div>
      <div class="flex gap-2"><svg class="size-[17px]"><use href="#mag"/></svg><svg class="size-4"><use href="#eyeb"/></svg></div>
    </div>
  </div>

  <div class="flex min-h-0 flex-1 items-start">
    <div class="h-full min-w-0 flex-1 overflow-hidden">
      <svg class="h-full w-full" viewBox="0 0 292 547" preserveAspectRatio="xMinYMin slice" font-family="Noto Sans CJK SC, Noto Sans, sans-serif">
        <text x="33" y="32" font-size="19" fill="#444">Non-Commercial Edition</text>
        <text x="163" y="38" font-size="23" font-weight="bold" fill="#585858">Geometry</text>
        <g fill="#b4b4b4"><circle cx="97" cy="126" r="3"/><circle cx="109" cy="127" r="3"/><circle cx="122" cy="129" r="3"/><circle cx="134" cy="130" r="3"/></g>
        <path d="M85 133Q101 129 116 133T147 134V152Q132 158 116 154T85 152Z" fill="#cecece" stroke="#999"/>
        <path d="M94 132L91 151M103 132L101 151M132 136L129 155M140 136L138 155" stroke="#555"/>
        <path d="M111 137l4-3 5 1 1 4-4 5-6-3z" fill="#c09a18"/><ellipse cx="116" cy="141" rx="8" ry="3.500" fill="#b8921a" transform="rotate(-8 116 141)"/><path d="M111 143l6-2 1 4-5 1z" fill="#111"/><path d="M113 137l4 1-2 2z" fill="#222"/><path d="M116 144l7-2-1 5-4 4-3-3z" fill="#eee" stroke="#888" stroke-width=".5"/>
        <circle cx="116" cy="275" r="31.500" fill="#44699c"/><circle cx="116" cy="275" r="21" fill="#9474d0"/>
        <path d="M115.500 160V256" stroke="#8ca47c"/>
        <circle cx="116" cy="158" r="3" fill="#b8b8b8"/><circle cx="116" cy="260" r="3" fill="#b8b8b8"/><circle cx="116" cy="290" r="3" fill="#b8b8b8"/>
        <rect x="83" y="264.500" width="65.500" height="21.500" rx="4" fill="#cecece" stroke="#ffd61a" stroke-width="2.200"/>
        <path d="M140 266H147V285H137Z" fill="#00b0f4"/><rect x="84.500" y="266" width="62.500" height="18.500" rx="3" fill="none" stroke="#181818" stroke-width="1.300"/>
        <path d="M94 267L91 284M104 267L101 284M131 267L129 284M140 267L137 284" stroke="#555"/>
        <path d="M108 277Q111 270 115 273T120 277T124 275" fill="none" stroke="#7c2c2c" stroke-width="1.300" stroke-dasharray="2 1"/>
        <g fill="#111" stroke="#7ca45c" stroke-width="1.500"><circle cx="160.500" cy="156.500" r="3.500"/><circle cx="160.500" cy="288.500" r="3.500"/></g>
        <path d="M172 156V154.500a2.500 2.500 0 0 1 5 0V156" fill="none" stroke="#5f6e6a" stroke-width="1.300"/><rect x="170.500" y="156" width="8" height="5" fill="#5f6e6a"/>
        <text x="153" y="148" font-size="13" fill="#c4c4c4">attribwrangle1</text>
        <text x="153" y="279" font-size="13" fill="#c4c4c4">add1</text>
      </svg>
    </div>

    <!-- Parameter editor -->
    <form class="w-[415px] shrink-0 overflow-hidden border-l-2 border-[#363636] bg-[#3c3c3c] pb-[9px]">
      <div class="flex h-[27px] items-center border-b border-black bg-linear-to-b from-[#383838] to-[#404040]">
        <span class="relative ml-1"><svg class="h-3.5 w-[18px]"><use href="#squig"/></svg><svg class="absolute right-0 -bottom-1 h-1 w-2 text-[#999]"><use href="#tri-d"/></svg></span>
        <label for="nm" class="ml-0.5 w-[25px] font-bold">Add</label>
        <input id="nm" value="add1" class="h-[23px] min-w-0 flex-1 border-2 border-[#262626] bg-[#131313] px-0.5 font-['Noto_Sans_Mono_CJK_SC','DejaVu_Sans_Mono',monospace] text-[13px] text-[#d4d4d4]">
        <button type="button" class="relative ml-2 text-[#d4d4d4]" aria-label="Gear menu"><svg class="size-[18px]"><use href="#gear"/></svg><svg class="absolute -right-0.5 -bottom-1 h-1 w-2 text-[#999]"><use href="#tri-d"/></svg></button>
        <button type="button" class="ml-2" aria-label="Search"><svg class="size-[18px]"><use href="#mag"/></svg></button>
        <button type="button" class="ml-[9px] grid size-[15px] place-items-center rounded-full border border-[#ddd] bg-[#22282a] font-serif leading-3 font-bold text-white italic">i</button>
        <button type="button" class="ml-[11px] grid size-[15px] place-items-center rounded-full border border-[#ddd] bg-[#22282a] leading-3 font-bold text-white">?</button>
      </div>
      <div class="flex h-[26px] items-end border-b border-[#5a5a5a]">
        <button type="button" class="h-[22px] w-[47px] border border-[#242424] bg-linear-to-b from-[#505050] to-[#343434]">Points</button>
        <button type="button" class="h-[22px] w-[60px] border-t border-[#303030] bg-[#4b4b4b]">Polygons</button>
        <button type="button" class="h-[22px] w-[59px] border border-[#242424] bg-linear-to-b from-[#505050] to-[#343434]">Particles</button>
      </div>
      <label class="flex h-[30px] items-center pl-[152px]"><input type="checkbox" class="mr-[7px] size-3.5 appearance-none border border-[#262626] bg-[#131313]">Remove Unused Points</label>
      <div class="flex h-[22px]">
        <label class="flex w-[82px] items-center gap-[5px] border border-black bg-linear-to-b from-[#4a4a4a] to-[#303030] pl-1 whitespace-nowrap"><input type="radio" name="mode" class="size-3 appearance-none rounded-full border-2 border-[#bbb]">By Pattern</label>
        <label class="flex w-[76px] items-center gap-[5px] border-t border-r border-black bg-linear-to-b from-[#505050] to-[#3e3e3e] pl-[5px] whitespace-nowrap"><input type="radio" name="mode" checked class="size-3 appearance-none rounded-full border border-[#bbb] bg-[#ddd] bg-clip-content p-[2px]">By Group</label>
      </div>
      <div class="grid grid-cols-[140px_1fr] items-center gap-x-[13px] gap-y-0.5 border-y border-l border-black border-t-[#5a5a5a] bg-[#3a3a3a] pt-[3px] pb-0.5">
        <label for="grp" class="text-right">Group</label>
        <div class="flex h-[23px] items-start">
          <input id="grp" class="h-[23px] w-[208px] border-2 border-[#262626] bg-[#131313] px-1">
          <button type="button" class="ml-px grid h-5 w-[18px] place-items-center border border-[#222] bg-[#404040] text-[#999]" aria-label="Choose group"><svg class="h-[5px] w-[7px]"><use href="#tri-d"/></svg></button>
          <button type="button" class="ml-[9px]" aria-label="Pick group"><svg class="h-[19px] w-3"><path d="M1 2L11 12L6 13L1 17Z" fill="#e0e0dc"/></svg></button>
        </div>
        <label for="add" class="text-right">Add</label>
        <div class="relative h-[23px] w-[162px]">
          <select id="add" class="h-[22px] w-full appearance-none rounded-sm border border-[#222] bg-linear-to-b from-[#505050] to-[#3c3c3c] pl-3.5"><option>All points</option></select>
          <span class="pointer-events-none absolute top-px right-px grid h-5 w-[22px] place-items-center bg-[#303030] text-[#8c8c8c]"><svg class="h-[13px] w-[7px]"><path d="M0 6H7L3.500 0ZM0 8H7L3.500 13Z" fill="currentColor"/></svg></span>
        </div>
        <label for="n" class="text-right text-[#808080]">N</label>
        <div class="flex h-[23px] items-center">
          <input id="n" value="2" disabled class="h-[23px] w-[74px] bg-[#303030] px-1 text-[#505050]">
          <div class="relative mr-[7px] ml-[3px] flex-1">
            <input type="range" disabled min="0" max="20" value="1" aria-label="N slider" class="block h-5 w-full appearance-none bg-transparent [&::-webkit-slider-runnable-track]:h-1 [&::-webkit-slider-runnable-track]:rounded-full [&::-webkit-slider-runnable-track]:bg-[#303030] [&::-webkit-slider-thumb]:-mt-2 [&::-webkit-slider-thumb]:h-5 [&::-webkit-slider-thumb]:w-1.5 [&::-webkit-slider-thumb]:appearance-none [&::-webkit-slider-thumb]:border [&::-webkit-slider-thumb]:border-[#2c2c2c] [&::-webkit-slider-thumb]:bg-[#505050]">
            <svg class="absolute bottom-1 left-0.5 h-0.5 w-full"><path d="M0 1H170" stroke="#4a4a4a" stroke-width="2" stroke-dasharray="1 17"/></svg>
          </div>
        </div>
        <label for="an" class="text-right text-[#808080]">Attribute Name</label>
        <div class="h-[23px] pr-[5px]"><input id="an" disabled class="h-[23px] w-full bg-[#303030]"></div>
        <label class="col-start-2 flex h-[22px] items-center"><input type="checkbox" class="mr-[7px] size-3.5 appearance-none border border-[#262626] bg-[#131313]">Closed</label>
      </div>
    </form>
  </div>
</section>
</div>
</body>
</html>
